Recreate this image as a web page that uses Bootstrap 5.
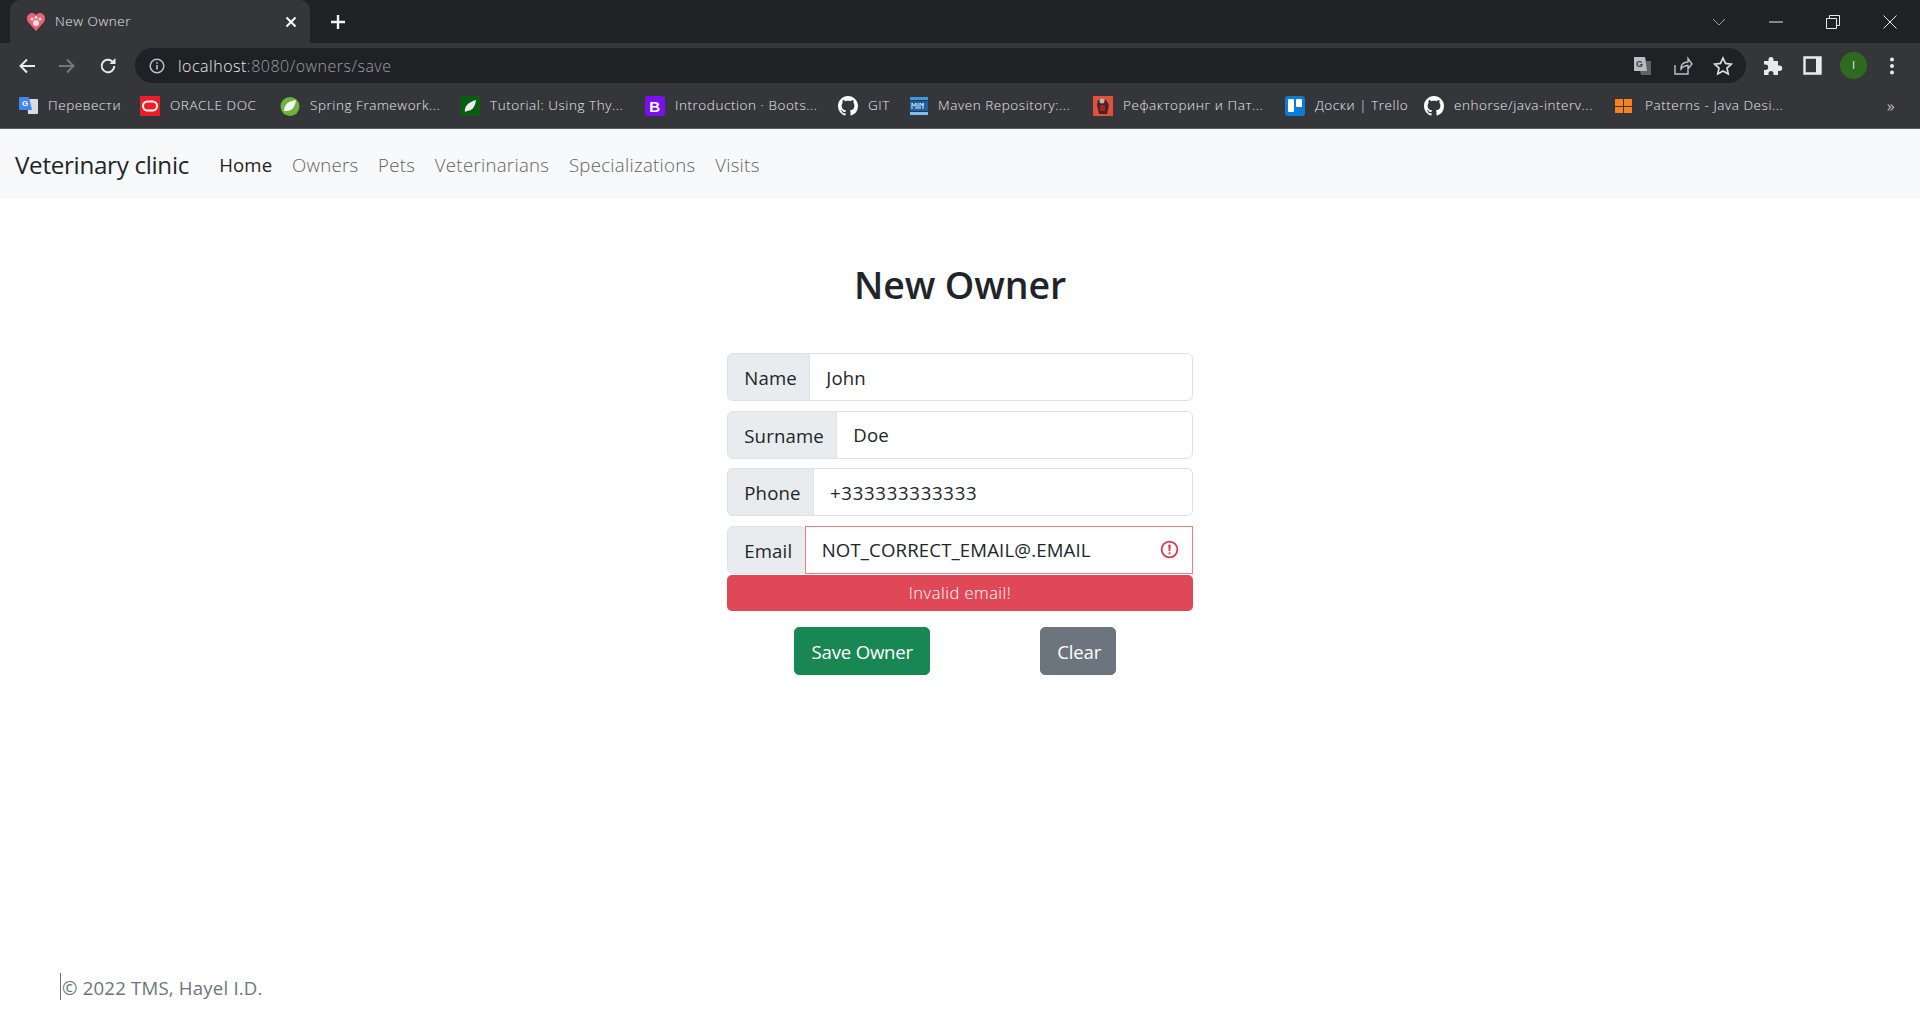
<!doctype html>
<html lang="en"><head><meta charset="utf-8"><title>New Owner</title>
<link href="https://cdn.jsdelivr.net/npm/bootstrap@5.3.0/dist/css/bootstrap.min.css" rel="stylesheet">
<style>
html,body{height:100%;overflow:hidden}
body{font-family:"Open Sans","Noto Sans",sans-serif;display:flex;flex-direction:column;height:1013px}
.chrome-ui{background:#35363a;color:#e8eaed;font-size:14px;flex:none}
.tabstrip{height:43px;background:#202124;padding-left:10px;padding-right:2px}
.tab-item{width:300px;height:43px;background:#35363a;border-radius:10px 10px 0 0;padding:0 13px 0 16px;font-size:13.5px;letter-spacing:.55px;font-weight:300}
.tab-name{margin-left:9px}
.newtab{margin-left:20px}
.winctl{gap:0}
.winbtn{width:57px;height:40px}
.toolbar{height:40px;padding:5px 14px 0 7px}
.navic{width:40px;height:35px}
.navic-wide{width:41px;margin-right:7px}
.omni{height:35px;background:#202124;border-radius:18px;padding:0 13px 0 14px}
.url{font-size:16px;margin-left:13px;letter-spacing:.5px;color:#e8eaed;font-weight:300}
.url span{color:#9aa0a6}
.omni-ic{gap:20px}
.tool-right{gap:20px;padding-left:17px;padding-right:11px}
.avatar{width:27px;height:27px;border-radius:50%;background:#2f6b1e;color:#e8eaed;font-size:11px;margin:0 2px 0 -2px}
.bookmarks{height:46px;display:grid;grid-template-columns:121px 140px 180px 185px 193px 72px 183px 192px 139px 191px 266px 1fr;padding-left:19px;font-size:13.5px;letter-spacing:.55px;font-weight:300;white-space:nowrap;border-bottom:1px solid #5a5b5e;align-items:center}
.bm{gap:10px;overflow:hidden}
.bm svg{flex:none}
.chev{padding-right:25px;text-align:right;font-size:17px;line-height:1}
.navbar-top{--bs-navbar-nav-link-padding-x:9.8px;height:70px;padding:2px 15px 0;flex:none}
.navbar-top .navbar-brand{font-size:24.2px;margin-right:20.4px;padding:0;color:#212529;letter-spacing:-.3px}
.navbar-top .nav-link{font-size:18.6px;letter-spacing:.15px}
.navbar-top .nav-link.active{color:#1f2124}
.navbar-top .nav-link.muted{color:#5f6266;font-weight:300;letter-spacing:.3px}
.main-area{flex:1;min-height:0}
.page-title{font-size:37.5px;font-weight:600;color:#212529;line-height:48px;margin:62px 0 44px;text-align:center;letter-spacing:-.1px}
.form-box{width:465.5px}
.input-group-lg>.form-control,.input-group-lg>.input-group-text{font-size:18.6px;color:#212529;border-radius:6px;letter-spacing:.15px;border-color:#dee2e6}
.input-group-lg>.input-group-text{padding:2px 12.4px 0 16px;background:#e9ecef}
.input-group-lg>.form-control{padding-left:16px;height:48px}
.input-group-lg>.form-control.digits{letter-spacing:.7px}
.input-group-lg>.form-control.is-invalid{border-radius:0;border-color:#ec7c88;background-position:right 12px center;background-size:21px 21px}
.input-row{margin-bottom:9.5px}
.input-row.last{margin-bottom:1px}
.err-box{background:#e04858;color:#fff;height:36px;font-size:16.5px;border-radius:5px;letter-spacing:.5px;font-weight:300;padding-top:2px}
.btn-row{margin-top:16px;padding-left:67px;gap:110px}
.btn-row .btn{height:48px;font-size:18.6px;padding:2px 16px 0;letter-spacing:-.2px;border-radius:5px}
.btn-save{width:136px;background:#198754}
.btn-clear{width:76px}
.foot{flex:none;height:40px;padding-left:60px;font-size:18.6px;color:#6c757d;letter-spacing:.2px}
.foot-in{border-left:1px solid #6c757d;padding-left:1px;height:27px;line-height:29px}
</style></head>
<body>
<div class="chrome-ui">
 <div class="tabstrip d-flex align-items-center">
  <div class="tab-item d-flex align-items-center">
   <svg width="20" height="20" viewBox="0 0 20 20"><path d="M10 19 2 10C-1 5 3 1 6 1c2 0 3 1 4 2 1-1 2-2 4-2 3 0 7 4 4 9z" fill="#ee5f78"/><circle cx="10" cy="11" r="3" fill="#f3e3d8"/><circle cx="6" cy="7" r="1.5" fill="#f3e3d8"/><circle cx="10" cy="5.5" r="1.5" fill="#f3e3d8"/><circle cx="14" cy="7" r="1.5" fill="#f3e3d8"/></svg>
   <span class="tab-name flex-grow-1">New Owner</span>
   <svg width="12" height="12" viewBox="0 0 12 12"><path d="M1.5 1.5l9 9m0-9l-9 9" stroke="#fff" stroke-width="2"/></svg>
  </div>
  <svg class="newtab" width="16" height="16" viewBox="0 0 16 16"><path d="M8 1v14M1 8h14" stroke="#f1f3f4" stroke-width="2.4"/></svg>
  <div class="ms-auto d-flex align-items-center winctl">
   <div class="winbtn d-flex align-items-center justify-content-center"><svg width="14" height="8" viewBox="0 0 14 8"><path d="M1 1l6 6 6-6" fill="none" stroke="#9aa0a6"/></svg></div>
   <div class="winbtn d-flex align-items-center justify-content-center"><svg width="14" height="2" viewBox="0 0 14 2"><path d="M0 1h14" stroke="#e8eaed"/></svg></div>
   <div class="winbtn d-flex align-items-center justify-content-center"><svg width="14" height="14" viewBox="0 0 14 14"><path d="M.5 3.5h10v10H.5zM3.5 3.5v-3h10v10h-3" fill="none" stroke="#e8eaed"/></svg></div>
   <div class="winbtn d-flex align-items-center justify-content-center"><svg width="14" height="14" viewBox="0 0 14 14"><path d="M.5.5l13 13m0-13l-13 13" stroke="#e8eaed"/></svg></div>
  </div>
 </div>
 <div class="toolbar d-flex align-items-center">
  <div class="navic d-flex align-items-center justify-content-center"><svg width="18" height="18" viewBox="0 0 18 18"><path d="M17 9H3M9 2.5 2.5 9 9 15.5" fill="none" stroke="#e8eaed" stroke-width="2"/></svg></div>
  <div class="navic d-flex align-items-center justify-content-center"><svg width="18" height="18" viewBox="0 0 18 18"><path d="M1 9h14M9 2.5 15.5 9 9 15.5" fill="none" stroke="#75777a" stroke-width="2"/></svg></div>
  <div class="navic navic-wide d-flex align-items-center justify-content-center"><svg width="18" height="18" viewBox="0 0 18 18"><path d="M15.3 9a6.3 6.3 0 1 1-1.8-4.4" fill="none" stroke="#e8eaed" stroke-width="2"/><path d="M16.500 1v6h-6z" fill="#e8eaed"/></svg></div>
  <div class="omni flex-grow-1 d-flex align-items-center">
   <svg width="16" height="16" viewBox="0 0 16 16"><circle cx="8" cy="8" r="6.800" fill="none" stroke="#bdc1c6" stroke-width="1.500"/><path d="M8 7v4.500M8 4.200v1.600" stroke="#bdc1c6" stroke-width="1.600"/></svg>
   <div class="url">localhost<span>:8080/owners/save</span></div>
   <div class="ms-auto d-flex align-items-center omni-ic">
    <svg width="20" height="20" viewBox="0 0 20 20"><path d="M1 1h11l1 4h5v14H8l-1-4H1z" fill="#5f6368"/><path d="M1 1h11l2 14H1z" fill="#b9bcc0"/><text x="3" y="11" font-size="9" font-weight="700" fill="#3c4043" font-family="Liberation Sans">G</text></svg>
    <svg width="20" height="20" viewBox="0 0 20 20"><path d="M2 9v9h13v-4M8 13c0-5 3-7 7-7V2.500L19 8l-4 5V9.500c-3 0-5 1-7 3.500z" fill="none" stroke="#bdc1c6" stroke-width="1.400"/></svg>
    <svg width="20" height="20" viewBox="0 0 20 20"><path d="m10 2 2.500 5.400 5.800.7-4.300 4 1.200 5.800-5.200-3-5.200 3 1.200-5.800-4.300-4 5.800-.7z" fill="none" stroke="#dadce0" stroke-width="1.700"/></svg>
   </div>
  </div>
  <div class="d-flex align-items-center tool-right">
   <svg width="20" height="20" viewBox="0 0 20 20"><path d="M8 1a2.500 2.500 0 0 1 2.500 2.500V5H15v4.500h1.500a2.700 2.700 0 0 1 0 5.400H15V19H10.500v-1.500a2.500 2.500 0 0 0-5 0V19H1v-5h1.500a2.700 2.700 0 0 0 0-5.400H1V5h4.500V3.500A2.500 2.500 0 0 1 8 1z" fill="#e8eaed"/></svg>
   <svg width="19" height="19" viewBox="0 0 19 19"><path d="M1.500 1.500h16v16h-16z" fill="none" stroke="#e8eaed" stroke-width="2.400"/><path d="M1 1h11v17H1z" fill="none"/><path d="M13 1h5v17h-5z" fill="#e8eaed"/></svg>
   <div class="avatar d-flex align-items-center justify-content-center">I</div>
   <svg width="6" height="20" viewBox="0 0 6 20"><circle cx="3" cy="3.500" r="2" fill="#e8eaed"/><circle cx="3" cy="10" r="2" fill="#e8eaed"/><circle cx="3" cy="16.500" r="2" fill="#e8eaed"/></svg>
  </div>
 </div>
 <div class="bookmarks">
  <div class="bm d-flex align-items-center"><svg width="19" height="19" viewBox="0 0 19 19"><path d="M8 3h10a1 1 0 0 1 1 1v13a1 1 0 0 1-1 1H9z" fill="#dadce0"/><path d="M1 1h9l3 13H1a1 1 0 0 1-1-1V2a1 1 0 0 1 1-1z" fill="#4285f4"/><text x="3" y="10" font-size="8" font-weight="700" fill="#fff" font-family="Liberation Sans">G</text></svg><span>Перевести</span></div>
  <div class="bm d-flex align-items-center"><svg width="20" height="20" viewBox="0 0 20 20"><path d="M0 0h20v20H0z" fill="#ee1c25"/><rect x="3" y="5.500" width="14" height="9" rx="4.500" fill="none" stroke="#fff" stroke-width="2"/></svg><span>ORACLE DOC</span></div>
  <div class="bm d-flex align-items-center"><svg width="20" height="20" viewBox="0 0 20 20"><circle cx="10" cy="10.500" r="9.500" fill="#6db33f"/><path d="M4 15c0-7 5-10 12-11-1 7-4 11-9 11-2 0-3 0-3 0z" fill="#f2f7ec"/></svg><span>Spring Framework...</span></div>
  <div class="bm d-flex align-items-center"><svg width="20" height="20" viewBox="0 0 20 20"><path d="M0 0h20v20H0z" fill="#0b5b12"/><path d="M5 16c-1-6 4-10 11-12-1 7-4 11-9 11z" fill="#e8efe6"/></svg><span>Tutorial: Using Thy...</span></div>
  <div class="bm d-flex align-items-center"><svg width="20" height="20" viewBox="0 0 20 20"><rect width="20" height="20" rx="3" fill="#7a10f0"/><text x="10" y="15.500" text-anchor="middle" font-size="15" font-weight="700" fill="#fff" font-family="Liberation Sans">B</text></svg><span>Introduction · Boots...</span></div>
  <div class="bm d-flex align-items-center"><svg width="20" height="20" viewBox="0 0 16 16"><path fill="#fff" d="M8 0C3.580 0 0 3.580 0 8c0 3.540 2.290 6.530 5.470 7.590.4.070.55-.17.55-.38 0-.19-.010-.82-.010-1.490-2.010.37-2.530-.49-2.690-.94-.09-.23-.48-.94-.82-1.130-.28-.15-.68-.52-.010-.53.63-.010 1.080.58 1.230.82.720 1.210 1.870.87 2.330.66.070-.52.28-.87.510-1.070-1.780-.2-3.640-.89-3.640-3.950 0-.87.310-1.590.82-2.150-.08-.2-.36-1.020.08-2.120 0 0 .67-.21 2.200.82.640-.18 1.320-.27 2-.27s1.360.09 2 .27c1.530-1.040 2.200-.82 2.200-.82.440 1.100.16 1.920.08 2.120.510.560.82 1.270.82 2.150 0 3.070-1.870 3.750-3.650 3.950.29.250.54.730.54 1.480 0 1.070-.010 1.930-.010 2.200 0 .21.150.46.55.38A8 8 0 0 0 16 8c0-4.420-3.580-8-8-8z"/></svg><span>GIT</span></div>
  <div class="bm d-flex align-items-center"><svg width="18" height="18" viewBox="0 0 18 18"><path d="M0 0h18v3H0z" fill="#3a9be0"/><path d="M0 4h18v10H0z" fill="#1d5fa8"/><path d="M0 15h18v3H0z" fill="#7cc0ee"/><path d="M2 12V6l2 3 2-3v6m2 0V6m2 6V6l3 3V6v6" stroke="#d8ecfa" fill="none"/></svg><span>Maven Repository:...</span></div>
  <div class="bm d-flex align-items-center"><svg width="20" height="20" viewBox="0 0 20 20"><path d="M0 0h20v20H0z" fill="#e2503c"/><path d="M5 4h8l3 5-2 9H6L4 9z" fill="#3a2a2a"/><path d="M7 9h5v6H7z" fill="#b71c1c"/><circle cx="9" cy="5" r="2.500" fill="#bdb5b0"/></svg><span>Рефакторинг и Пат...</span></div>
  <div class="bm d-flex align-items-center"><svg width="20" height="20" viewBox="0 0 20 20"><rect width="20" height="20" rx="3" fill="#0c7cd5"/><rect x="3" y="3" width="6" height="13" rx="1" fill="#fff"/><rect x="11" y="3" width="6" height="8" rx="1" fill="#fff"/></svg><span>Доски | Trello</span></div>
  <div class="bm d-flex align-items-center"><svg width="20" height="20" viewBox="0 0 16 16"><path fill="#fff" d="M8 0C3.580 0 0 3.580 0 8c0 3.540 2.290 6.530 5.470 7.590.4.070.55-.17.55-.38 0-.19-.010-.82-.010-1.490-2.010.37-2.530-.49-2.690-.94-.09-.23-.48-.94-.82-1.130-.28-.15-.68-.52-.010-.53.63-.010 1.080.58 1.230.82.720 1.210 1.870.87 2.330.66.070-.52.28-.87.510-1.070-1.780-.2-3.640-.89-3.640-3.950 0-.87.310-1.590.82-2.150-.08-.2-.36-1.020.08-2.120 0 0 .67-.21 2.200.82.640-.18 1.320-.27 2-.27s1.360.09 2 .27c1.530-1.040 2.200-.82 2.200-.82.440 1.100.16 1.920.08 2.120.510.560.82 1.270.82 2.150 0 3.070-1.870 3.750-3.650 3.950.29.250.54.730.54 1.480 0 1.070-.010 1.930-.010 2.200 0 .21.150.46.55.38A8 8 0 0 0 16 8c0-4.420-3.580-8-8-8z"/></svg><span>enhorse/java-interv...</span></div>
  <div class="bm d-flex align-items-center"><svg width="20" height="18" viewBox="0 0 20 18"><path d="M0 2h8v7H0zM9 2h8v7H9zM0 10h8v6H0zM9 10h8v6H9z" fill="#f5821f"/></svg><span>Patterns - Java Desi...</span></div>
  <div class="chev">»</div>
 </div>
</div>
<nav class="navbar navbar-expand-lg bg-light navbar-top">
 <a class="navbar-brand" href="#">Veterinary clinic</a>
 <ul class="navbar-nav flex-row">
  <li class="nav-item"><a class="nav-link active" href="#">Home</a></li>
  <li class="nav-item"><a class="nav-link muted" href="#">Owners</a></li>
  <li class="nav-item"><a class="nav-link muted" href="#">Pets</a></li>
  <li class="nav-item"><a class="nav-link muted" href="#">Veterinarians</a></li>
  <li class="nav-item"><a class="nav-link muted" href="#">Specializations</a></li>
  <li class="nav-item"><a class="nav-link muted" href="#">Visits</a></li>
 </ul>
</nav>
<main class="main-area">
 <h1 class="page-title">New Owner</h1>
 <form class="form-box mx-auto" onsubmit="return false">
  <div class="input-group input-group-lg input-row"><span class="input-group-text">Name</span><input class="form-control" value="John"></div>
  <div class="input-group input-group-lg input-row"><span class="input-group-text">Surname</span><input class="form-control" value="Doe"></div>
  <div class="input-group input-group-lg input-row"><span class="input-group-text">Phone</span><input class="form-control digits" value="+333333333333"></div>
  <div class="input-group input-group-lg input-row last has-validation"><span class="input-group-text">Email</span><input class="form-control is-invalid" value="NOT_CORRECT_EMAIL@.EMAIL"></div>
  <div class="err-box d-flex align-items-center justify-content-center">Invalid email!</div>
  <div class="d-flex btn-row">
   <button class="btn btn-success btn-save">Save Owner</button>
   <button class="btn btn-secondary btn-clear">Clear</button>
  </div>
 </form>
</main>
<footer class="foot"><div class="foot-in">© 2022 TMS, Hayel I.D.</div></footer>
</body></html>
